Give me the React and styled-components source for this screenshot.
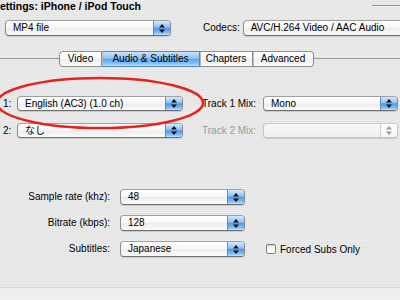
import React from "react";
import styled, { createGlobalStyle, css } from "styled-components";

const GlobalStyle = createGlobalStyle`
  html, body {
    margin: 0;
    padding: 0;
  }
  body {
    font-family: "Liberation Sans", Arial, "Noto Sans CJK JP", sans-serif;
    font-size: 10px;
    color: #000;
  }
`;

const stripes = css`
  background: repeating-linear-gradient(
    to bottom,
    #ebebeb 0px,
    #ebebeb 1px,
    #e4e4e4 1px,
    #e4e4e4 2px
  );
`;

const Page = styled.div`
  position: relative;
  width: 400px;
  height: 300px;
  overflow: hidden;
  display: flex;
  flex-direction: column;
  ${stripes}
`;

const TitleRow = styled.div`
  display: flex;
  align-items: center;
  height: 12px;
`;

const Title = styled.div`
  font-weight: bold;
  font-size: 10.5px;
  line-height: 12px;
  white-space: nowrap;
`;

const TitleRule = styled.div`
  margin-left: auto;
  width: 28px;
  height: 1px;
  margin-top: -1px;
  background: #8c8c8c;
  box-shadow: 0 1px 0 #fafafa;
`;

const TopRow = styled.div`
  display: flex;
  align-items: center;
  margin-top: 8px;
  padding-left: 5px;
  height: 16px;
`;

const Label = styled.span`
  white-space: nowrap;
  line-height: 12px;
  color: ${(p) => (p.$disabled ? "#9a9a9a" : "#000")};
  width: ${(p) => p.$width || "auto"};
  margin-left: ${(p) => p.$ml || "0"};
  text-align: ${(p) => p.$align || "left"};
`;

const PopupBox = styled.div`
  flex: none;
  display: flex;
  width: ${(p) => p.$width}px;
  height: ${(p) => p.$height || 16}px;
  margin-left: ${(p) => p.$ml || 0}px;
  box-sizing: border-box;
  border: 1px solid ${(p) => (p.$disabled ? "#c4c4c4" : "#8a8a8a")};
  border-top-color: ${(p) => (p.$disabled ? "#c9c9c9" : "#a0a0a0")};
  border-bottom-color: ${(p) => (p.$disabled ? "#bdbdbd" : "#6e6e6e")};
  border-radius: 4px;
  overflow: hidden;
  box-shadow: 0 1px 1px rgba(0, 0, 0, 0.12);
  background: ${(p) =>
    p.$disabled
      ? "linear-gradient(#f7f7f7, #f1f1f1)"
      : "linear-gradient(#ffffff 0%, #f6f6f6 50%, #ececec 51%, #fbfbfb 100%)"};
`;

const PopupValue = styled.span`
  flex: 1;
  padding-left: 7px;
  line-height: ${(p) => (p.$height || 16) - 2}px;
  white-space: nowrap;
  overflow: hidden;
`;

const ArrowButton = styled.span`
  flex: none;
  width: 16px;
  display: flex;
  align-items: center;
  justify-content: center;
  border-left: 1px solid ${(p) => (p.$disabled ? "#d0d0d0" : "#5c8fc8")};
  background: ${(p) =>
    p.$disabled
      ? "linear-gradient(#ffffff, #f4f4f4)"
      : "linear-gradient(#d4e9fd 0%, #8cc1f5 45%, #4c97ea 52%, #7fc0f8 85%, #c4e6ff 100%)"};
`;

const Arrows = ({ disabled }) => (
  <svg width="6" height="9" viewBox="0 0 6 9">
    <path d="M0 3.5 L3 0 L6 3.5 Z" fill={disabled ? "#9a9a9a" : "#111"} />
    <path d="M0 5.5 L3 9 L6 5.5 Z" fill={disabled ? "#9a9a9a" : "#111"} />
  </svg>
);

const Popup = ({ value, width, height, ml, disabled }) => (
  <PopupBox $width={width} $height={height} $ml={ml} $disabled={disabled}>
    <PopupValue $height={height}>{value}</PopupValue>
    <ArrowButton $disabled={disabled}>
      <Arrows disabled={disabled} />
    </ArrowButton>
  </PopupBox>
);

const TabBox = styled.div`
  margin-top: 22px;
  border-top: 1px solid #9c9c9c;
  display: flex;
  flex-direction: column;
`;

const TabStrip = styled.div`
  display: flex;
  margin-top: -8px;
  padding-left: 59px;
  height: 16px;
`;

const Tab = styled.div`
  box-sizing: border-box;
  width: ${(p) => p.$width}px;
  height: 16px;
  line-height: 14px;
  text-align: center;
  border: 1px solid #8e8e8e;
  border-left-width: ${(p) => (p.$first ? 1 : 0)}px;
  border-radius: ${(p) =>
    p.$first ? "4px 0 0 4px" : p.$last ? "0 4px 4px 0" : "0"};
  background: ${(p) =>
    p.$active
      ? "linear-gradient(#c9e2fb 0%, #8ec3f5 45%, #5fa5ee 52%, #86c4f7 85%, #bfe0fb 100%)"
      : "linear-gradient(#ffffff 0%, #f7f7f7 50%, #ededed 51%, #fafafa 100%)"};
  border-color: ${(p) => (p.$active ? "#5a86b8" : "#8e8e8e")};
  box-shadow: inset ${(p) => (p.$first ? 0 : 1)}px 0 0 #b8b8b8;
`;

const AudioRow = styled.div`
  display: flex;
  align-items: center;
  padding-left: 3px;
  margin-top: ${(p) => p.$mt}px;
  height: 15px;
`;

const FormGrid = styled.div`
  display: grid;
  grid-template-columns: 110px 125px auto;
  column-gap: 10px;
  row-gap: 10px;
  align-items: center;
  margin-top: 51px;
  grid-auto-rows: 16px;
`;

const CheckWrap = styled.label`
  display: flex;
  align-items: center;
  margin-left: 11px;
  gap: 4px;
`;

const CheckBox = styled.span`
  width: 10px;
  height: 10px;
  box-sizing: border-box;
  border: 1px solid #7e7e7e;
  border-radius: 2px;
  background: linear-gradient(#f2f2f2, #ffffff);
  box-shadow: inset 0 1px 1px rgba(0, 0, 0, 0.15);
`;

const Footer = styled.div`
  margin-top: auto;
  height: 12px;
  border-top: 1px solid #d6d6d6;
  background: repeating-linear-gradient(
    to bottom,
    #f2f2f2 0px,
    #f2f2f2 1px,
    #ececec 1px,
    #ececec 2px
  );
`;

const Annotation = styled.svg`
  position: absolute;
  left: 0;
  top: 0;
  pointer-events: none;
`;

export default function App() {
  return (
    <>
      <GlobalStyle />
      <Page>
        <TitleRow>
          <Title>ettings: iPhone / iPod Touch</Title>
          <TitleRule />
        </TitleRow>

        <TopRow>
          <Popup value="MP4 file" width={166} />
          <Label $ml="32px">Codecs:</Label>
          <Popup value="AVC/H.264 Video / AAC Audio" width={180} ml={3} />
        </TopRow>

        <TabBox>
          <TabStrip>
            <Tab $width={43} $first>Video</Tab>
            <Tab $width={98} $active>Audio &amp; Subtitles</Tab>
            <Tab $width={53}>Chapters</Tab>
            <Tab $width={61} $last>Advanced</Tab>
          </TabStrip>

          <AudioRow $mt={29}>
            <Label $width="14px">1:</Label>
            <Popup value="English (AC3) (1.0 ch)" width={166} height={15} />
            <Label $ml="19px" $width="61px">Track 1 Mix:</Label>
            <Popup value="Mono" width={135} height={15} />
          </AudioRow>
          <AudioRow $mt={12}>
            <Label $width="14px">2:</Label>
            <Popup value="なし" width={166} height={15} />
            <Label $ml="19px" $width="61px" $disabled>Track 2 Mix:</Label>
            <Popup value="" width={135} height={15} disabled />
          </AudioRow>

          <FormGrid>
            <Label $align="right">Sample rate (khz):</Label>
            <Popup value="48" width={125} />
            <span />
            <Label $align="right">Bitrate (kbps):</Label>
            <Popup value="128" width={125} />
            <span />
            <Label $align="right">Subtitles:</Label>
            <Popup value="Japanese" width={125} />
            <CheckWrap>
              <CheckBox />
              <span>Forced Subs Only</span>
            </CheckWrap>
          </FormGrid>
        </TabBox>

        <Footer />

        <Annotation width="400" height="300" viewBox="0 0 400 300">
          <ellipse
            cx="100"
            cy="103"
            rx="103"
            ry="25"
            fill="none"
            stroke="#e4231f"
            strokeWidth="2.5"
          />
        </Annotation>
      </Page>
    </>
  );
}
